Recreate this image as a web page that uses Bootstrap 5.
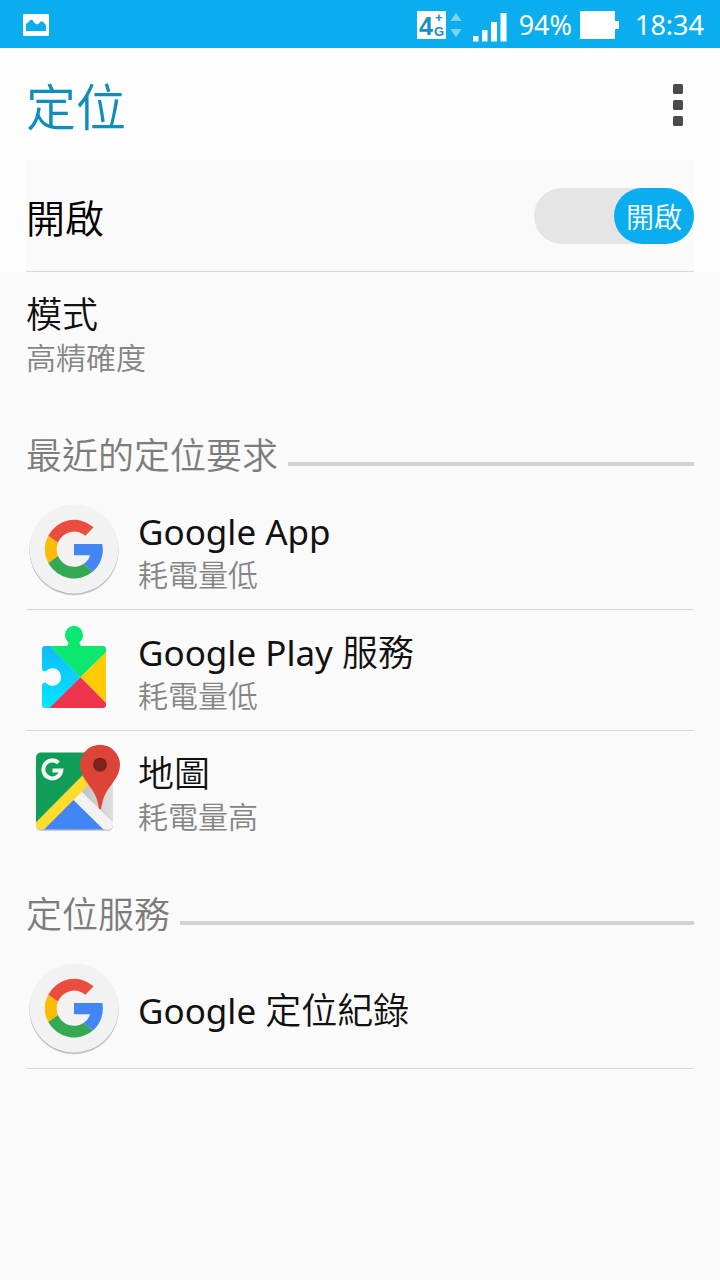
<!DOCTYPE html>
<html lang="zh-Hant">
<head>
<meta charset="utf-8">
<meta name="viewport" content="width=device-width, initial-scale=1">
<title>定位</title>
<link href="https://cdn.jsdelivr.net/npm/bootstrap@5.3.0/dist/css/bootstrap.min.css" rel="stylesheet">
<style>
  body { background: #fafafa; color: #111; font-family: "Noto Sans", "Noto Sans CJK TC", sans-serif; }
  .statusbar { background: #0aaeee; color: #fff; height: 48px; font-size: 27px; line-height: 44px; padding: 2px 16px 0 23px; }
  .gutter { padding-left: 26px; padding-right: 26px; }
  .cjk { font-family: "Noto Sans CJK TC", sans-serif; font-weight: 350; }
  .latin { font-family: "Noto Sans", sans-serif; font-size: 35px; line-height: 1; font-weight: 400; }
  .topzone { background: #fefefe; }
  .titlebar { height: 112px; }
  .page-title { font-size: 50px; line-height: 64px; color: #0f8dbb; }
  .more-btn { width: 32px; height: 56px; }
  .master { height: 112px; background: #fafafa; border-bottom: 1px solid #d9d9d9; }
  .master-label { font-size: 39px; line-height: 56px; color: #000; }
  .toggle-input { appearance: none; display: block; width: 160px; height: 56px; border-radius: 28px; background: #e5e5e5; cursor: pointer; }
  .toggle-knob { width: 80px; height: 56px; border-radius: 28px; background: #0aaeee; color: #fff; font-size: 28px; line-height: 56px; pointer-events: none; }
  .toggle-input:not(:checked) + .toggle-knob { right: auto !important; left: 0; background: #aaa; }
  .setting { min-height: 120px; color: #111; }
  .setting + .setting { min-height: 121px; border-top: 1px solid #d9d9d9; }
  .last-ruled { min-height: 121px; border-bottom: 1px solid #d9d9d9; }
  .setting-title { font-size: 36px; line-height: 48px; }
  .setting-note { font-size: 30px; line-height: 40px; color: #858585; }
  .section-head { padding: 37px 0 12px; }
  .section-title { font-size: 36px; line-height: 48px; color: #7c7c7c; }
  .section-rule { height: 4px; background: #d2d2d2; margin: 22px 0 0 10px; }
  .app-icon { width: 96px; height: 96px; }
</style>
</head>
<body>
<svg class="d-none" aria-hidden="true">
  <symbol id="google" viewBox="0 0 96 96">
    <circle cx="48" cy="50" r="44.500" fill="#000" opacity=".1"/>
    <circle cx="48" cy="49.200" r="44.700" fill="#000" opacity=".16"/>
    <circle cx="48" cy="48" r="44.500" fill="#f1f2f1"/>
    <path fill="#ea4c3d" d="M22.200 34.700A29.300 29.300 0 0 1 67.600 26.200L59.400 34.700A17.300 17.300 0 0 0 32 41.800z"/>
    <path fill="#fbbc05" d="M22.200 34.700A29.300 29.300 0 0 0 22.300 62L32 55A17.300 17.300 0 0 1 32 41.800z"/>
    <path fill="#34a853" d="M22.300 62A29.300 29.300 0 0 0 67 70.500L57.500 63A17.300 17.300 0 0 1 32 55z"/>
    <path fill="#4285f4" d="M48 43H76.300A29.300 29.300 0 0 1 67 70.500L57.500 63Q62.500 60 64 54.300H48z"/>
  </symbol>
</svg>

<div class="statusbar d-flex align-items-center">
  <svg width="26" height="22" viewBox="0 0 26 22" aria-hidden="true"><rect width="26" height="22" rx="1" fill="#fff"/><path fill="#0aaeee" d="M3 17V10Q6 8.500 7 6H9.500Q11 9 14 10.500Q16.500 9.500 17.500 7.500H20Q21 9.500 23 11V17z"/></svg>
  <svg class="ms-auto" width="90" height="46" viewBox="417 2 90 46" role="img" aria-label="4G+">
    <rect x="417" y="11" width="29" height="28" rx="1" fill="#fff"/>
    <g fill="#1690c4" font-family="Liberation Sans, sans-serif" font-weight="bold">
      <text x="419" y="35" font-size="25" font-family="Liberation Sans Narrow, Liberation Sans, sans-serif">4</text><text x="434" y="36" font-size="13">G</text><text x="435" y="22" font-size="13">+</text>
    </g>
    <path fill="#7cd0f3" d="M450.500 21L456 12.500 461.500 21zM450.500 29H461.500L456 37.500z"/>
    <path fill="#fff" d="M473 36h5.500v5.500H473zM482 30h5.500v11.500H482zM491 22h6v19.500H491zM500.500 13h6v28.500H500.500z"/>
  </svg>
  <span class="ms-2 ps-1">94%</span>
  <svg class="ms-2" width="39" height="28" viewBox="0 0 39 28" aria-hidden="true"><path fill="#fff" d="M1 0H34Q35 0 35 1V10H39V18H35V27Q35 28 34 28H1Q0 28 0 27V1Q0 0 1 0z"/></svg>
  <span class="ms-3">18:34</span>
</div>

<header class="topzone">
  <div class="titlebar gutter d-flex align-items-center justify-content-between">
    <h1 class="page-title cjk m-0">定位</h1>
    <button type="button" class="more-btn btn p-0 border-0" aria-label="更多選項">
      <svg width="32" height="48" viewBox="0 0 32 48" fill="#4b4b4b" aria-hidden="true"><rect x="11" y="4" width="10" height="10" rx="1.500"/><rect x="11" y="20" width="10" height="10" rx="1.500"/><rect x="11" y="36" width="10" height="10" rx="1.500"/></svg>
    </button>
  </div>
  <div class="gutter">
    <div class="master d-flex align-items-center justify-content-between">
      <label class="master-label cjk" for="locationSwitch">開啟</label>
      <div class="position-relative">
        <input class="toggle-input m-0" type="checkbox" role="switch" id="locationSwitch" checked>
        <span class="toggle-knob cjk position-absolute top-0 end-0 text-center" aria-hidden="true">開啟</span>
      </div>
    </div>
  </div>
</header>

<main class="gutter">
  <a href="#mode" class="setting d-flex flex-column justify-content-center text-decoration-none">
    <span class="setting-title cjk">模式</span>
    <span class="setting-note cjk">高精確度</span>
  </a>

  <section>
    <div class="section-head d-flex align-items-center">
      <h2 class="section-title cjk m-0">最近的定位要求</h2>
      <div class="section-rule flex-grow-1"></div>
    </div>
    <a href="#google-app" class="setting d-flex align-items-center gap-3 text-decoration-none">
      <svg class="app-icon flex-shrink-0" aria-hidden="true"><use href="#google"/></svg>
      <span class="d-flex flex-column"><span class="setting-title cjk"><span class="latin">Google App</span></span><span class="setting-note cjk">耗電量低</span></span>
    </a>
    <a href="#play" class="setting d-flex align-items-center gap-3 text-decoration-none">
      <svg class="app-icon flex-shrink-0" viewBox="0 0 96 96" aria-hidden="true">
        <defs>
          <clipPath id="puzzle"><path d="M19 24H39Q42.500 24 42.500 20.500Q39 17.500 39 12.800A9 9 0 0 1 57 12.800Q57 17.500 53.500 20.500Q53.500 24 57 24H77Q80 24 80 27V83Q80 86 77 86H19Q16 86 16 83V64Q16 60.500 19.500 60.500A8.800 8.800 0 1 0 19.500 49.500Q16 49.500 16 46V27Q16 24 19 24z"/></clipPath>
          <linearGradient id="sky" x1="0" y1="0" x2="0" y2="1"><stop stop-color="#12baff"/><stop offset="1" stop-color="#00e7ff"/></linearGradient>
        </defs>
        <g clip-path="url(#puzzle)">
          <path fill="url(#sky)" d="M16 24H24L54.500 55.300 24 86H16z"/>
          <path fill="#0be870" d="M23.500 24V0H80V30.500L54.500 55.300z"/>
          <path fill="#ffcb05" d="M80 30V81L54.500 55.300z"/>
          <path fill="#ee334c" d="M54.500 55.300L80 81V86H23.500z"/>
        </g>
      </svg>
      <span class="d-flex flex-column"><span class="setting-title cjk"><span class="latin">Google Play </span>服務</span><span class="setting-note cjk">耗電量低</span></span>
    </a>
    <a href="#maps" class="setting d-flex align-items-center gap-3 text-decoration-none">
      <svg class="app-icon flex-shrink-0" viewBox="0 0 96 96" aria-hidden="true">
        <defs>
          <clipPath id="tile"><rect x="10" y="9.500" width="77" height="77" rx="5"/></clipPath>
          <linearGradient id="paper" x1="0" x2="1"><stop stop-color="#bcbcbc"/><stop offset="1" stop-color="#dedede"/></linearGradient>
        </defs>
        <rect x="10" y="11" width="77" height="77" rx="5" fill="#000" opacity=".18"/>
        <g clip-path="url(#tile)">
          <path fill="url(#paper)" d="M50 45L87 9V87H50z"/>
          <path fill="#0f9d58" d="M10 9H80L10 79.500z"/>
          <path fill="#4285f4" d="M46.700 54L80 87H16z"/>
          <path fill="#f2f2f2" d="M46 55.500L54.500 47.500 87 79.500V87H78z"/>
          <path fill="#fddc2e" d="M10 79.500L66 23V38.500L17.500 87H10z"/>
        </g>
        <path fill="none" stroke="#f3f7f4" stroke-width="4" d="M32.500 19.800A9 9 0 1 0 35.300 27.500H26.500"/>
        <path fill="#db4437" d="M74 66.500C72.500 66.500 72.500 60 70 54C66 43.500 54 35 54 21.800A20 20 0 0 1 94 21.800C94 35 82 43.500 78 54C75.500 60 75.500 66.500 74 66.500z"/>
        <circle cx="74" cy="21.800" r="7" fill="#7b231c"/>
      </svg>
      <span class="d-flex flex-column"><span class="setting-title cjk">地圖</span><span class="setting-note cjk">耗電量高</span></span>
    </a>
  </section>

  <section>
    <div class="section-head d-flex align-items-center">
      <h2 class="section-title cjk m-0">定位服務</h2>
      <div class="section-rule flex-grow-1"></div>
    </div>
    <a href="#history" class="setting last-ruled d-flex align-items-center gap-3 text-decoration-none">
      <svg class="app-icon flex-shrink-0" aria-hidden="true"><use href="#google"/></svg>
      <span class="setting-title cjk"><span class="latin">Google </span>定位紀錄</span>
    </a>
  </section>
</main>
<script src="https://cdn.jsdelivr.net/npm/bootstrap@5.3.0/dist/js/bootstrap.bundle.min.js"></script>
</body>
</html>
